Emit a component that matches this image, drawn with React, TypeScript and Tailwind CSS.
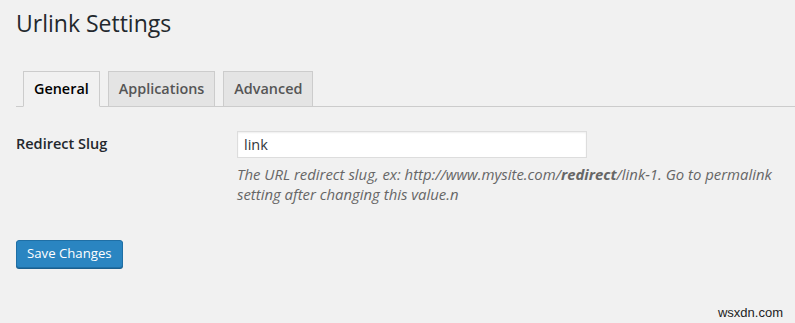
export default function App() {
  return (
    <div className="relative w-[795px] h-[323px] bg-[#f1f1f1] overflow-hidden text-[#444]" style={{ fontFamily: '"Open Sans", sans-serif' }}>
      <div className="pl-4 pr-0">
        <h1 className="pt-[9px] text-[23px] leading-[29px] font-normal text-[#23282d]">Urlink Settings</h1>
        <div className="mt-[33px] flex items-end gap-2 pl-[7px] border-b border-[#ccc]">
          <div className="-mb-px h-[36px] px-[10px] flex items-center border border-[#ccc] border-b-[#f1f1f1] bg-[#f1f1f1] text-[14.4px] font-semibold text-black">General</div>
          <div className="h-[35px] px-[10px] flex items-center border border-[#ccc] border-b-0 bg-[#e4e4e4] text-[14.4px] font-semibold text-[#555]">Applications</div>
          <div className="h-[35px] px-[10px] flex items-center border border-[#ccc] border-b-0 bg-[#e4e4e4] text-[14.4px] font-semibold text-[#555]">Advanced</div>
        </div>
        <div className="mt-[24px] flex">
          <div className="w-[221px] pt-[2px] text-[14.5px] font-semibold text-[#23282d]">Redirect Slug</div>
          <div>
            <div className="w-[350px] h-[27px] bg-white border border-[#ddd] shadow-[inset_0_1px_2px_rgba(0,0,0,0.07)] flex items-center px-[6px] text-[14.5px] text-[#32373c]">link</div>
            <p className="mt-[6px] w-[545px] text-[14.9px] leading-[20px] italic text-[#666]">
              The URL redirect slug, ex: http://www.mysite.com/<b className="font-bold">redirect</b>/link-1. Go to permalink setting after changing this value.n
            </p>
          </div>
        </div>
        <button className="mt-[36px] h-[28px] px-[10px] rounded-[3px] bg-[#2a85c1] border border-[#1f6fa5] shadow-[0_1px_0_#1a5f8e] text-white text-[13.2px] font-medium">Save Changes</button>
      </div>
      <div className="absolute right-[12px] bottom-[1px] text-[13px] text-[#222]" style={{ fontFamily: '"Liberation Sans", Arial, sans-serif' }}>wsxdn.com</div>
    </div>
  );
}
